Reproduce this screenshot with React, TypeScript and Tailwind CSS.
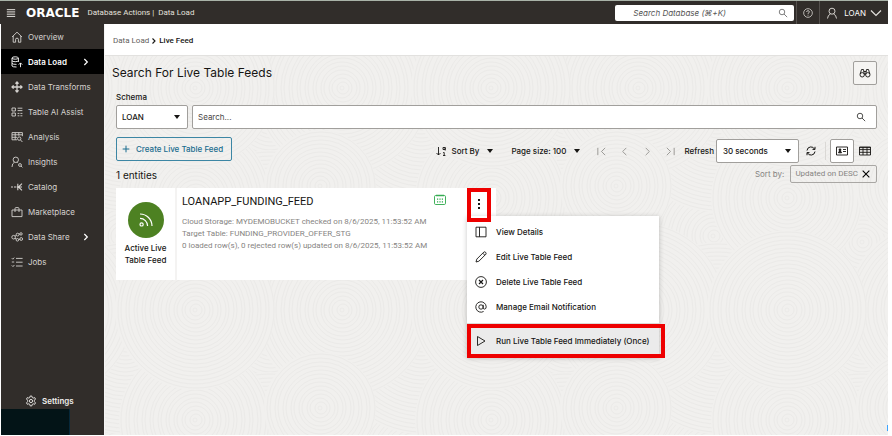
import { ReactNode } from "react";

type IconProps = { children: ReactNode; className?: string };

function Icon({ children, className = "size-3" }: IconProps) {
  return (
    <svg
      viewBox="0 0 12 12"
      fill="none"
      stroke="currentColor"
      strokeWidth="0.9"
      aria-hidden="true"
      className={`shrink-0 ${className}`}
    >
      {children}
    </svg>
  );
}

const Caret = ({ className = "" }: { className?: string }) => (
  <svg viewBox="0 0 6 4" fill="currentColor" aria-hidden="true" className={`h-1 w-1.5 shrink-0 ${className}`}>
    <path d="M0 0h6L3 4z" />
  </svg>
);

const Magnifier = ({ className }: { className?: string }) => (
  <Icon className={className}>
    <circle cx="4.8" cy="4.8" r="3.3" />
    <path d="M7.2 7.2 11 11" />
  </Icon>
);

const navItems = [
  {
    label: "Overview",
    icon: <path d="M1 6 6 1.2 11 6M2.2 5v6.2h2.4V8.2q0-1 1.4-1t1.4 1v3h2.4V5" />,
  },
  {
    label: "Data Load",
    active: true,
    arrow: true,
    icon: (
      <>
        <ellipse cx="4.200" cy="2" rx="3.200" ry="1.200" />
        <path d="M1 2v8q.5 1 4.500 1M7.400 2v4M1 4.700q.5 1 3.200 1t3.200-1M1 7.400q.5 1 4.500 1M9.500 11.200V7M7.800 8.600l1.700-1.700 1.700 1.700" />
      </>
    ),
  },
  {
    label: "Data Transforms",
    icon: (
      <path
        strokeWidth="1.3"
        d="M6 1v10M1 6h10M4.400 2.600 6 1l1.600 1.600M4.400 9.400 6 11l1.600-1.600M2.600 4.400 1 6l1.600 1.600M9.400 4.400 11 6 9.400 7.600"
      />
    ),
  },
  {
    label: "Table AI Assist",
    icon: <path d="M1 2h3.4v3H1zM1 7h3.4v3H1zM6.6 2.2h4.8M6.6 4.6h4.8M6.6 7.4h1.8M9.4 7.4h2M6.6 9.8h1.8M9.4 9.8h2" />,
  },
  {
    label: "Analysis",
    icon: (
      <>
        <path d="M6 8.8H1V1.6h10.4v3.6M1 3.8h10.4M1 6.3h5M4.2 1.6v7.2M7.8 1.6v3" />
        <circle cx="8.2" cy="7.6" r="1.7" />
        <path d="m9.4 8.8 2 2.2" />
      </>
    ),
  },
  {
    label: "Insights",
    icon: (
      <>
        <circle cx="4.8" cy="3.8" r="2.7" />
        <path d="M1 11q0-3.6 2.6-5M6 6.2l1 1" />
        <circle cx="9" cy="9" r="1.4" />
        <path d="m10 10 1.4 1.4" />
      </>
    ),
  },
  {
    label: "Catalog",
    icon: <path strokeWidth="1.1" d="M0 6h2M3 6h2M5.600 6h3M6.800 2.800v6.400M11 2.600 7.400 6l3.600 3.400M8.600 6h2.400" />,
  },
  {
    label: "Marketplace",
    icon: <path d="M1 4h10v6.6H1zM4 6V2.6q0-1 1-1h2q1 0 1 1V6" />,
  },
  {
    label: "Data Share",
    arrow: true,
    icon: (
      <>
        <circle cx="2.6" cy="6.2" r="1.8" />
        <circle cx="6.6" cy="3.6" r="1.4" />
        <circle cx="6.4" cy="8.8" r="1.3" />
        <circle cx="10" cy="2.9" r="1.2" />
        <circle cx="10.2" cy="8" r="1.4" />
        <path d="m4 5.2 1.2-.8M4 7.2l1.2.9M7.8 8.6l1-.2M8 3.2h.8" />
      </>
    ),
  },
  {
    label: "Jobs",
    icon: <path d="M5 2.4h6.6M5 6.2h6.6M5 10h6.6M.8 2.2l1 1 1.4-1.6M.8 6h2.4M.8 9.4l1.2 1.2 1.4-1.6" />,
  },
];

const menuItems = [
  {
    label: "View Details",
    icon: <path d="M1 1.2h10v9.6H1zM4.500 1.200v9.600" />,
  },
  {
    label: "Edit Live Table Feed",
    icon: <path d="m1 11 .8-2.9L8.9 1q.9-.5 1.7.3t.4 1.8L3.9 10.200zM7.800 2.200l2 2" />,
  },
  {
    label: "Delete Live Table Feed",
    icon: (
      <>
        <circle cx="6" cy="6" r="5.400" />
        <path strokeWidth="1.200" d="m4 4 4 4M8 4 4 8" />
      </>
    ),
  },
  {
    label: "Manage Email Notification",
    icon: (
      <>
        <circle cx="6" cy="6" r="2.200" />
        <path d="M8.200 3.800v3q.1 1.300 1.400 1.300 1.600-.2 1.600-2.300A5.200 5.200 0 1 0 8.600 10.500" />
      </>
    ),
  },
];

const swirls = [
  { x: 16, y: 180, r: 120 },
  { x: 165, y: 60, r: 120 },
  { x: 20, y: 60, r: 96 },
  { x: 165, y: 186, r: 92 },
  { x: 90, y: 142, r: 76 },
  { x: 237, y: 32, r: 88 },
  { x: 90, y: 32, r: 80 },
  { x: 215, y: 130, r: 56 },
];

function Texture() {
  return (
    <svg className="absolute inset-0 size-full" aria-hidden="true">
      <defs>
        <pattern id="swirls" width="296" height="222" patternUnits="userSpaceOnUse">
          {swirls.map((s) =>
            [-296, 0, 296].map((dx) =>
              [-222, 0, 222].map((dy) => (
                <g key={`${s.x}-${s.y}-${dx}-${dy}`} fill="none" stroke="#ebeae8">
                  <circle cx={s.x + dx} cy={s.y + dy} r={s.r} fill="#f1f0ee" stroke="none" />
                  {Array.from({ length: Math.floor(s.r / 4) }, (_, i) => (
                    <circle key={i} cx={s.x + dx + (i % 2)} cy={s.y + dy} r={i * 4 + 2} />
                  ))}
                </g>
              )),
            ),
          )}
        </pattern>
      </defs>
      <rect width="100%" height="100%" fill="url(#swirls)" />
    </svg>
  );
}

function Header() {
  return (
    <header className="flex h-6 shrink-0 items-center border-t border-[#a9b3a8] bg-[#312d2a] text-[#e4e1dd]">
      <button aria-label="Navigation menu" className="ml-1.5 flex">
        <Icon className="size-2.5">
          <path d="M1 2h10M1 4.700h10M1 7.400h10M1 10.100h10" strokeWidth="1.200" />
        </Icon>
      </button>
      <span className="ml-2.5 font-[DejaVu_Sans,sans-serif] text-[12px] font-bold leading-none text-white">ORACLE</span>
      <span className="ml-2 font-[Roboto,sans-serif] text-[8px]">Database Actions |&nbsp; Data Load</span>
      <label className="ml-auto flex h-4 w-[179px] items-center rounded-xs bg-white pl-4.5 pr-1.5 text-[#555]">
        <input
          aria-label="Search Database"
          placeholder="Search Database (⌘+K)"
          className="min-w-0 flex-1 text-[8px] italic outline-none placeholder:text-[#555]"
        />
        <Magnifier className="size-2.5" />
      </label>
      <button aria-label="Help" className="ml-0.5 flex h-full w-6 items-center justify-center border-x border-[#55514e]">
        <Icon className="size-2.5">
          <circle cx="6" cy="6" r="5.200" />
          <path d="M4.300 4.800Q4.400 3.200 6 3.200t1.700 1.500Q7.700 5.600 6 6.500v.9M6 8.200v1" />
        </Icon>
      </button>
      <button className="flex h-full items-center px-1.5 text-[8px]">
        <Icon>
          <circle cx="6" cy="4.200" r="3" />
          <path d="M1.500 11.500q.3-3.500 3-4.600M10.500 11.500q-.3-3.500-3-4.600" />
        </Icon>
        <span className="ml-1.5 text-[8px] text-white">LOAN</span>
        <Icon className="ml-1 size-3">
          <path d="m1 3.500 5 5 5-5" strokeWidth="1.200" />
        </Icon>
      </button>
    </header>
  );
}

function Sidebar() {
  return (
    <nav className="flex w-[103px] shrink-0 flex-col bg-[#312d2a] text-[8px] text-[#d5d2cf]">
      {navItems.map((item) => (
        <a
          key={item.label}
          href="#"
          className={`flex h-[25px] items-center pl-2.5 pr-3.5 ${item.active ? "bg-black font-semibold text-white" : ""}`}
        >
          <Icon>{item.icon}</Icon>
          <span className="ml-[5px] whitespace-nowrap">{item.label}</span>
          {item.arrow && (
            <Icon className="ml-auto size-2 text-white">
              <path d="m3.500 1.500 4.500 4.500-4.500 4.500" strokeWidth="1.800" />
            </Icon>
          )}
        </a>
      ))}
      <a href="#" className="mt-auto flex h-4 items-center pl-6 font-semibold text-[#efedeb]">
        <Icon>
          <circle cx="6" cy="6" r="1.600" />
          <path d="m5.200 1h1.600l.4 1.500 1 .6 1.500-.5.8 1.400-1.100 1.200v1.500l1.100 1.200-.8 1.400-1.500-.5-1 .6-.4 1.500H5.200l-.4-1.500-1-.6-1.500.5-.8-1.400 1.100-1.200V5.200L1.500 4l.8-1.400 1.500.5 1-.6z" />
        </Icon>
        <span className="ml-[5px]">Settings</span>
      </a>
      <div className="h-[26px] w-[69px] border-r border-[#06283a] bg-[#031417]" />
    </nav>
  );
}

function Toolbar() {
  return (
    <div className="flex items-start text-[8px] font-medium">
      <button className="flex h-6 items-center rounded-xs border border-[#3c86a4] pl-[5px] pr-2 text-[#1b6d8f]">
        <Icon className="size-2">
          <path d="M6 1v10M1 6h10" strokeWidth="1.500" />
        </Icon>
        <span className="ml-1.5">Create Live Table Feed</span>
      </button>
      <div className="ml-auto mt-0.5 flex items-center">
        <button className="flex items-center">
          <Icon>
            <path d="M3.500 2v8M1.500 8l2 2 2-2" />
            <path d="M8 2.500h2.200v2H8zM10.200 2.500v3M8.200 7.500h1v3M8 10.500h2.400" />
          </Icon>
          <span className="ml-1">Sort By</span>
          <Caret className="ml-2" />
        </button>
        <button className="ml-4.5 flex items-center">
          Page size: 100
          <Caret className="ml-2" />
        </button>
        <div className="ml-4 flex items-center gap-3 text-[#8b8986]">
          <button aria-label="First page">
            <Icon className="size-[11px]">
              <path d="M2 2v8M10 2 6 6l4 4" />
            </Icon>
          </button>
          <button aria-label="Previous page">
            <Icon className="size-[11px]">
              <path d="M8 2 4 6l4 4" />
            </Icon>
          </button>
          <button aria-label="Next page">
            <Icon className="size-[11px]">
              <path d="m4 2 4 4-4 4" />
            </Icon>
          </button>
          <button aria-label="Last page">
            <Icon className="size-[11px]">
              <path d="m2 2 4 4-4 4M10 2v8" />
            </Icon>
          </button>
        </div>
        <label htmlFor="refresh" className="ml-2">
          Refresh
        </label>
        <div className="relative ml-0.5">
          <select
            id="refresh"
            className="h-6 w-[83px] appearance-none rounded-xs border border-[#a19f9c] bg-white pl-1.5 outline-none"
          >
            <option>30 seconds</option>
          </select>
          <Caret className="pointer-events-none absolute right-2 top-2.5" />
        </div>
        <button aria-label="Refresh now" className="ml-1.5">
          <Icon>
            <path
              d="M2 5.500a4 4 0 0 1 7.600-1.300M10 6.500a4 4 0 0 1-7.600 1.300M10 1.800v2.600H7.500M2 10.200V7.600h2.500"
              strokeWidth="1"
            />
          </Icon>
        </button>
        <div className="ml-2 h-4.5 w-px bg-[#dad8d5]" />
        <button
          aria-label="Card view"
          className="ml-1 flex size-6 items-center justify-center rounded-xs border border-[#a19f9c] bg-white"
        >
          <Icon>
            <path d="M.5 2h11v8H.5zM7 4.500h3M7 6.500h3" />
            <path d="M3.200 4h1.600v1.500H3.200zM2.500 7.800q0-1.500 1.500-1.500t1.500 1.500z" fill="currentColor" />
          </Icon>
        </button>
        <button aria-label="Table view" className="ml-[5px] mr-1.5">
          <Icon>
            <path d="M.5 2h11v8H.5zM.5 4.600h11M.5 7.300h11M4 2v8M8 2v8M.5 2.600h11" />
          </Icon>
        </button>
      </div>
    </div>
  );
}

function FeedCard() {
  return (
    <article className="relative flex h-[92px] w-[380px] bg-white">
      <div className="flex w-[61px] shrink-0 flex-col items-center border-r-2 border-[#f4f3f2] pt-3.5">
        <div className="flex size-9 items-center justify-center rounded-full bg-[#4d8122] text-white">
          <Icon className="size-4">
            <circle cx="2.700" cy="9.300" r="1.200" />
            <path d="M1.500 4.800a5.700 5.700 0 0 1 5.700 5.700M1.500 1.500a9 9 0 0 1 9 9" />
          </Icon>
        </div>
        <p className="mt-1 text-center text-[8px] font-medium leading-[12px]">
          Active Live
          <br />
          Table Feed
        </p>
      </div>
      <div className="flex-1 pl-[5px] pt-1.5 font-[Roboto,sans-serif]">
        <h2 className="text-[11px] leading-4">LOANAPP_FUNDING_FEED</h2>
        <div className="mt-1.5 text-[8px] leading-[12px] text-[#868482]">
          <p>Cloud Storage: MYDEMOBUCKET checked on 8/6/2025, 11:53:52 AM</p>
          <p>Target Table: FUNDING_PROVIDER_OFFER_STG</p>
          <p>0 loaded row(s), 0 rejected row(s) updated on 8/6/2025, 11:53:52 AM</p>
        </div>
      </div>
      <Icon className="absolute right-[50px] top-1.5 size-3 text-[#2ba84a]">
        <rect x=".5" y="1.500" width="11" height="9" rx="1.200" />
        <path d="M3 .5v2M5 .5v2M7 .5v2M9 .5v2" />
        <path d="M3 5.200h6M3 7.800h6" strokeDasharray="1.200 1.200" strokeWidth="1.300" />
      </Icon>
      <button
        aria-label="Feed actions"
        className="absolute right-[5px] top-0 z-10 flex h-[34px] w-6 items-center justify-center border-4 border-[#ee0000] pb-0.5"
      >
        <Icon>
          <path d="M6 1v2M6 5v2M6 9v2" strokeWidth="2" />
        </Icon>
      </button>
      <div
        role="menu"
        className="absolute left-[351px] top-7 w-[192px] bg-white text-[8px] font-medium shadow-[0_1px_5px_rgba(0,0,0,0.22)]"
      >
        <div className="pb-1 pt-[3px]">
          {menuItems.map((item) => (
            <button key={item.label} role="menuitem" className="flex h-[25px] w-full items-center gap-[9px] pl-2">
              <Icon>{item.icon}</Icon>
              {item.label}
            </button>
          ))}
        </div>
        <div className="h-[34px] border-y border-[#dddbd8] bg-[#ebebeb]">
          <button
            role="menuitem"
            className="flex h-[34px] w-[198px] items-center gap-[9px] border-4 border-[#ee0000] pl-1 whitespace-nowrap"
          >
            <Icon>
              <path d="M2.500 1.500v9L10 6z" />
            </Icon>
            Run Live Table Feed Immediately (Once)
          </button>
        </div>
      </div>
    </article>
  );
}

export default function App() {
  return (
    <div className="flex min-h-screen flex-col bg-white pb-px pr-1 font-[Inter,sans-serif] text-[#161513]">
      <Header />
      <div className="flex flex-1 pl-px">
        <Sidebar />
        <main className="flex min-w-0 flex-1 flex-col border-l border-[#f5f5f5]">
          <nav
            aria-label="Breadcrumb"
            className="flex h-8 items-center gap-0.5 border-b border-[#e2e1df] pl-2 pt-0.5 font-[Roboto,sans-serif] text-[8px]"
          >
            <a href="#" className="text-[#5f5d5b]">
              Data Load
            </a>
            <Icon className="size-1.5">
              <path d="m3 1 5 5-5 5" strokeWidth="2.200" />
            </Icon>
            <span className="font-medium">Live Feed</span>
          </nav>
          <section className="relative isolate flex-1 bg-[#f1f0ee] pl-[11px] pr-[11px] pt-[5px]">
            <div className="absolute inset-0 -z-10">
              <Texture />
            </div>
            <div className="-ml-1 flex items-center justify-between">
              <h1 className="text-[12px]">Search For Live Table Feeds</h1>
              <button
                aria-label="Search options"
                className="flex size-6 items-center justify-center rounded-xs border border-[#a19f9c] bg-[#f5f4f2]"
              >
                <Icon>
                  <circle cx="3.200" cy="7.800" r="2.200" />
                  <circle cx="8.800" cy="7.800" r="2.200" />
                  <path d="M1.200 7 2.500 2.500h2l.8 5M10.800 7 9.500 2.500h-2l-.8 5M4.800 4.500h2.400M5.400 7h1.200" />
                </Icon>
              </button>
            </div>
            <label htmlFor="schema" className="mt-[5px] block text-[8px] font-medium leading-[15px]">
              Schema
            </label>
            <div className="flex gap-1 text-[8px]">
              <div className="relative">
                <select
                  id="schema"
                  className="h-6 w-[72px] appearance-none rounded-xs border border-[#a19f9c] bg-white pl-[5px] font-medium outline-none"
                >
                  <option>LOAN</option>
                </select>
                <Caret className="pointer-events-none absolute right-2 top-2.5" />
              </div>
              <label className="flex h-6 flex-1 items-center rounded-xs border border-[#a19f9c] bg-white pl-[5px] pr-2.5">
                <input
                  aria-label="Search"
                  placeholder="Search..."
                  className="min-w-0 flex-1 outline-none placeholder:text-[#4a4846]"
                />
                <Magnifier className="size-2.5" />
              </label>
            </div>
            <div className="mt-2">
              <Toolbar />
            </div>
            <div className="mt-0.5 flex items-center justify-between">
              <p className="mt-0.5 text-[10px] leading-4">1 entities</p>
              <div className="flex items-center gap-1.5 text-[8px] text-[#868482]">
                Sort by:
                <span className="flex h-[18px] items-center gap-1 rounded-xs border border-[#a9a7a4] pl-1 pr-1.5 font-[Roboto,sans-serif] text-[8px]">
                  Updated on DESC
                  <button aria-label="Remove sort" className="text-black">
                    <Icon className="size-2">
                      <path d="m1 1 10 10M11 1 1 11" strokeWidth="1.600" />
                    </Icon>
                  </button>
                </span>
              </div>
            </div>
            <div className="mt-[5px]">
              <FeedCard />
            </div>
            <div className="absolute bottom-1 right-0 h-1.5 w-px bg-[#3da5ff]" />
          </section>
        </main>
      </div>
    </div>
  );
}
